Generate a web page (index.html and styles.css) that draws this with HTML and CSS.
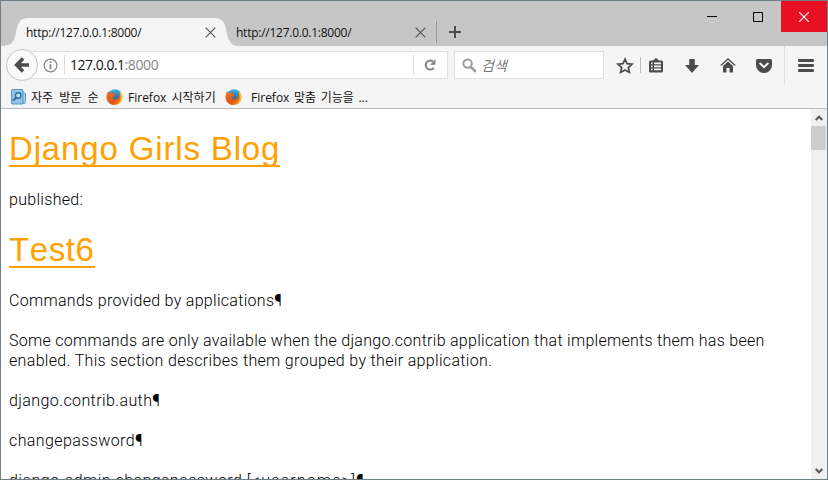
FILE: index.html
```html
<!DOCTYPE html>
<html lang="ko">
<head>
<meta charset="utf-8">
<title>http://127.0.0.1:8000/</title>
<link rel="stylesheet" href="styles.css">
</head>
<body>
<div class="window">
  <header class="titlebar">
    <div class="tab active">
      <svg class="tab-shape" width="238" height="28" viewBox="0 0 238 28"><path d="M0 28C8 28 12 26 14 19L16 10C17.500 4 20 0 27 0H213C220 0 223 3 224.500 9L226.500 18C228.500 25 232 28 238 28Z" fill="#f5f5f5"/></svg>
      <span class="tab-label">http://127.0.0.1:8000/</span>
      <svg class="tab-close" width="11" height="11" viewBox="0 0 11 11"><path d="M.7.7l9.600 9.600M10.300.7L.7 10.300"/></svg>
    </div>
    <div class="tab">
      <span class="tab-label">http://127.0.0.1:8000/</span>
      <svg class="tab-close" width="11" height="11" viewBox="0 0 11 11"><path d="M.7.7l9.600 9.600M10.300.7L.7 10.300"/></svg>
    </div>
    <div class="new-tab"><svg width="12" height="12" viewBox="0 0 12 12"><path d="M6 0v12M0 6h12" stroke="#4c4c4c" stroke-width="2"/></svg></div>
    <div class="controls">
      <span class="control"><svg width="10" height="10" viewBox="0 0 10 10"><path d="M0 4.500h10" stroke="#000"/></svg></span>
      <span class="control"><svg width="10" height="10" viewBox="0 0 10 10"><path d="M.5.5h9v9h-9z" fill="none" stroke="#000"/></svg></span>
      <span class="control close"><svg width="10" height="10" viewBox="0 0 10 10"><path d="M0 0l10 10M10 0L0 10" stroke="#fff" stroke-width="1.100"/></svg></span>
    </div>
  </header>

  <nav class="navbar">
    <div class="back"><svg width="16" height="16" viewBox="0 0 16 16"><path d="M9 1.500L2.700 8 9 14.500M3.500 8H15" fill="none" stroke="#4c4c4c" stroke-width="3.600"/></svg></div>
    <div class="urlbar">
      <svg class="info" width="15" height="15" viewBox="0 0 15 15"><circle cx="7.500" cy="7.500" r="6.400" fill="none" stroke="#858585" stroke-width="1.200"/><path d="M7.500 3.300v1.700M7.500 6.300v5" stroke="#858585" stroke-width="1.800"/></svg>
      <span class="address">127.0.0.1<span class="port">:8000</span></span>
      <span class="reload"><svg width="12" height="12" viewBox="0 0 12 12"><path d="M9.800 8.800A4.500 4.500 0 1 1 9 2.600" fill="none" stroke="#858585" stroke-width="2"/><path d="M11.500.2v5.600H6z" fill="#858585"/></svg></span>
    </div>
    <div class="search">
      <svg width="15" height="15" viewBox="0 0 15 15" fill="none" stroke="#999"><circle cx="5.600" cy="5.600" r="4.200" stroke-width="2"/><path d="M8.800 8.800l5 5" stroke-width="2.400"/></svg>
      <span>검색</span>
    </div>
    <div class="tools">
      <span class="tool star"><svg width="18" height="18" viewBox="0 0 18 18"><path d="M9 2.200l2 4.500 5 .5-3.700 3.300 1.100 4.900L9 12.900l-4.400 2.500 1.100-4.900L2 7.200l5-.5z" fill="none" stroke="#4c4c4c" stroke-width="1.700"/></svg></span>
      <span class="tool list"><svg width="14" height="15" viewBox="0 0 14 15"><path d="M4 2.500L7 0l3 2.500h2.500Q14 2.500 14 4v9q0 1.500-1.500 1.500h-11Q0 14.500 0 13V4q0-1.500 1.500-1.500z" fill="#4c4c4c"/><path d="M2 5.300h1.500M5 5.300h7M2 8.300h1.500M5 8.300h7M2 11.300h1.500M5 11.300h7" stroke="#f5f5f5" stroke-width="1.700"/></svg></span>
      <span class="tool down-arrow"><svg width="14" height="14" viewBox="0 0 14 14"><path d="M4.200 0h5.600v6H14l-7 8L0 6h4.200z" fill="#4c4c4c"/></svg></span>
      <span class="tool"><svg width="16" height="15" viewBox="0 0 16 15"><path d="M.8 7.500L8 1l7.200 6.500" fill="none" stroke="#4c4c4c" stroke-width="1.300"/><path d="M3 8l5-4.500L13 8v6.500H9.500V10h-3v4.500H3z" fill="#4c4c4c"/></svg></span>
      <span class="tool"><svg width="16" height="14" viewBox="0 0 16 14"><path d="M1.500 0h13Q16 0 16 1.500V6A8 8 0 0 1 0 6V1.500Q0 0 1.500 0z" fill="#4c4c4c"/><path d="M4.200 4.500L8 8.200l3.800-3.700" fill="none" stroke="#f5f5f5" stroke-width="2" stroke-linecap="round"/></svg></span>
      <span class="tool menu"><svg width="16" height="13" viewBox="0 0 16 13"><path d="M1.300 1.500h13.400M1.300 6.500h13.400M1.300 11.500h13.400" stroke="#4c4c4c" stroke-width="2.800" stroke-linecap="round"/></svg></span>
    </div>
  </nav>

  <svg class="defs" width="0" height="0" aria-hidden="true">
    <defs>
      <linearGradient id="fire" x1="0" y1="0" x2="1" y2="1"><stop offset="0" stop-color="#ed7624"/><stop offset=".6" stop-color="#df5417"/><stop offset="1" stop-color="#f6b630"/></linearGradient>
      <linearGradient id="globe" x1="0" y1="0" x2="0" y2="1"><stop offset="0" stop-color="#42b4e2"/><stop offset="1" stop-color="#174b8c"/></linearGradient>
      <symbol id="firefox" viewBox="0 0 16 16">
        <circle cx="8.500" cy="7.500" r="7.300" fill="url(#globe)"/>
        <path d="M1.600 2.200L3.300 4l2.300-.1 1.700-1.400L7 5l1.900.9-1.200 1.500-1.500.5c0 2.100 2 3 4 2.100 1.700-.7 2.500-2.300 2-4.200l1 .9-.3-3.300C15.500 5.300 16.300 8 15.500 10.800 14.500 14 11.500 16 8 16 3.500 16 0 12.600 0 8.200 0 6 .7 4 1.600 2.200z" fill="url(#fire)"/>
        <path d="M13.300 2c2.600 2.500 3.500 6.100 2 9.400-.8 1.800-2.200 3.100-4 3.900 2.700-2.800 3.400-5.900 2.400-9.600z" fill="#f8c53d"/>
      </symbol>
    </defs>
  </svg>
  <div class="bookmarks">
    <span class="bookmark frequent"><svg width="15" height="16" viewBox="0 0 15 16"><path d="M11 4h2.500q1 0 1 1v8.500q0 1-1 1H10z" fill="#a9d4ed" stroke="#5e99bd"/><rect x=".5" y=".5" width="11.500" height="14.500" rx="1" fill="#8ec4e5" stroke="#5796bf"/><circle cx="7.200" cy="6.500" r="2.700" fill="#c3e3f5" stroke="#306e9b" stroke-width="1.400"/><path d="M5.200 8.500L2 11.700" stroke="#306e9b" stroke-width="1.800"/></svg>자주 방문 순</span>
    <span class="bookmark start"><svg width="17" height="16"><use href="#firefox"/></svg>Firefox 시작하기</span>
    <span class="bookmark custom"><svg width="17" height="16"><use href="#firefox"/></svg>Firefox 맞춤 기능을 ...</span>
  </div>

  <div class="viewport">
    <main class="page">
      <h1><a class="t-blog">Django Girls Blog</a></h1>
      <p class="l-pub">published:</p>
      <h1><a class="t-test">Test6</a></h1>
      <p class="l-cmd">Commands provided by applications¶</p>
      <p><span class="l-some">Some commands are only available when the django.contrib application that implements them has been</span><br><span class="l-enabled">enabled. This section describes them grouped by their application.</span></p>
      <p class="l-auth">django.contrib.auth¶</p>
      <p class="l-auth">changepassword¶</p>
      <p class="l-admin">django-admin changepassword <span class="argument">[&lt;username&gt;]</span>¶</p>
    </main>
    <div class="scrollbar">
      <svg width="8" height="6" viewBox="0 0 8 6"><path d="M.7 5L4 1.700 7.300 5" fill="none" stroke="#555" stroke-width="2"/></svg>
      <div class="thumb"></div>
      <svg class="down" width="8" height="6" viewBox="0 0 8 6"><path d="M.7 1L4 4.300 7.300 1" fill="none" stroke="#555" stroke-width="2"/></svg>
    </div>
  </div>
</div>
</body>
</html>
```

FILE: styles.css
```css
* { box-sizing: border-box; }
body { margin: 0; font-family: "Open Sans", "Noto Sans CJK KR", sans-serif; }
svg { display: block; flex: none; }
.window { width: 828px; height: 480px; border: 1px solid #727e86; display: flex; flex-direction: column; overflow: hidden; background: #f5f5f5; }
.titlebar { height: 45px; flex: none; display: flex; background: #c6c6c6; }
.tab { display: flex; align-items: center; width: 202px; height: 28px; margin-top: 17px; padding: 0 11px 0 1px; font-size: 12px; white-space: nowrap; color: #111; }
.tab.active { width: 234px; padding: 0 19px 0 25px; position: relative; }
.tab-shape { position: absolute; left: 0; top: 0; }
.tab-label { position: relative; flex: 1; letter-spacing: -.25px; }
.tab-close { position: relative; fill: none; stroke: #555; stroke-width: 1.2; }
.new-tab { margin: 20px 0 0 -1px; width: 25px; height: 22px; border-left: 1px solid #999; padding: 5px 0 0 12px; }
.controls { margin-left: auto; display: flex; height: 31px; }
.control { width: 46px; height: 31px; display: flex; align-items: center; justify-content: center; }
.control.close { background: #e81123; }

.navbar { height: 39px; flex: none; display: flex; align-items: flex-start; }
.back { width: 32px; height: 32px; border: 1px solid #c4c4c4; border-radius: 50%; margin: 3px 0 0 5px; display: flex; align-items: center; justify-content: center; background: #fafafa; position: relative; flex: none; }
.urlbar { width: 424px; height: 28px; margin: 5px 0 0 -14px; border: 1px solid #e0e0e0; background: #fff; display: flex; align-items: center; padding-left: 18px; flex: none; }
.address { font-size: 14px; line-height: 20px; margin-left: 6px; padding-left: 5px; border-left: 1px solid #ddd; letter-spacing: -.5px; color: #111; flex: 1; }
.port { color: #888; letter-spacing: -.4px; }
.reload { width: 34px; height: 20px; border-left: 1px solid #ddd; display: flex; align-items: center; padding-left: 10px; }
.search { width: 150px; height: 28px; margin: 5px 0 0 6px; border: 1px solid #e0e0e0; background: #fff; display: flex; align-items: center; padding-left: 7px; gap: 4px; flex: none; font-size: 14px; font-style: italic; color: #777; }
.tools { display: flex; height: 39px; }
.tool { width: 36px; height: 39px; display: flex; align-items: center; justify-content: center; }
.star { width: 36px; padding-left: 6px; }
.list { width: 32px; position: relative; }
.list::before { content: ""; position: absolute; left: 0; top: 11px; width: 1px; height: 16px; background: #c0c0c0; }
.down-arrow { margin-left: 2px; }
.menu { border-left: 1px solid #e0e0e0; width: 43px; margin-left: 2px; }

.bookmarks { height: 24px; flex: none; border-bottom: 1px solid #bbb; font-size: 12px; display: flex; align-items: center; color: #111; white-space: nowrap; padding-left: 10px; }
.bookmark { display: flex; align-items: center; }
.frequent { width: 95px; gap: 5px; word-spacing: 3px; }
.start { width: 119px; gap: 5px; word-spacing: 2px; }
.custom { gap: 9px; word-spacing: 1.5px; }

.viewport { flex: 1; min-height: 0; display: flex; background: #fff; }
.page { flex: 1; padding: 19px 0 0 8px; overflow: hidden; font-family: Roboto, "Noto Sans CJK KR", sans-serif; font-size: 16px; font-weight: 300; white-space: nowrap; color: #000; letter-spacing: .3px; }
.page p { margin: 20px 0; line-height: 20px; position: relative; top: 1px; }
.page h1 { margin: 0; height: 41px; font-family: "Liberation Sans", sans-serif; font-size: 33px; font-weight: 400; color: #ffa100; font-kerning: none; }
.page h1 a { display: inline-block; border-bottom: 2px solid #ffa100; line-height: 36px; height: 39px; padding-top: 3px; }
.t-blog { letter-spacing: .85px; }
.t-test { letter-spacing: .6px; }
.l-some { letter-spacing: .28px; }
.l-enabled { letter-spacing: .33px; }
.l-auth { letter-spacing: .4px; }
.l-admin { letter-spacing: .47px; }
.argument { letter-spacing: 1.25px; }
.scrollbar { width: 16px; background: #f0f0f0; display: flex; flex-direction: column; align-items: center; padding: 6px 1px 5px 0; }
.thumb { width: 15px; height: 24px; margin-top: 5px; background: #cdcdcd; }
.down { margin-top: auto; }
```
